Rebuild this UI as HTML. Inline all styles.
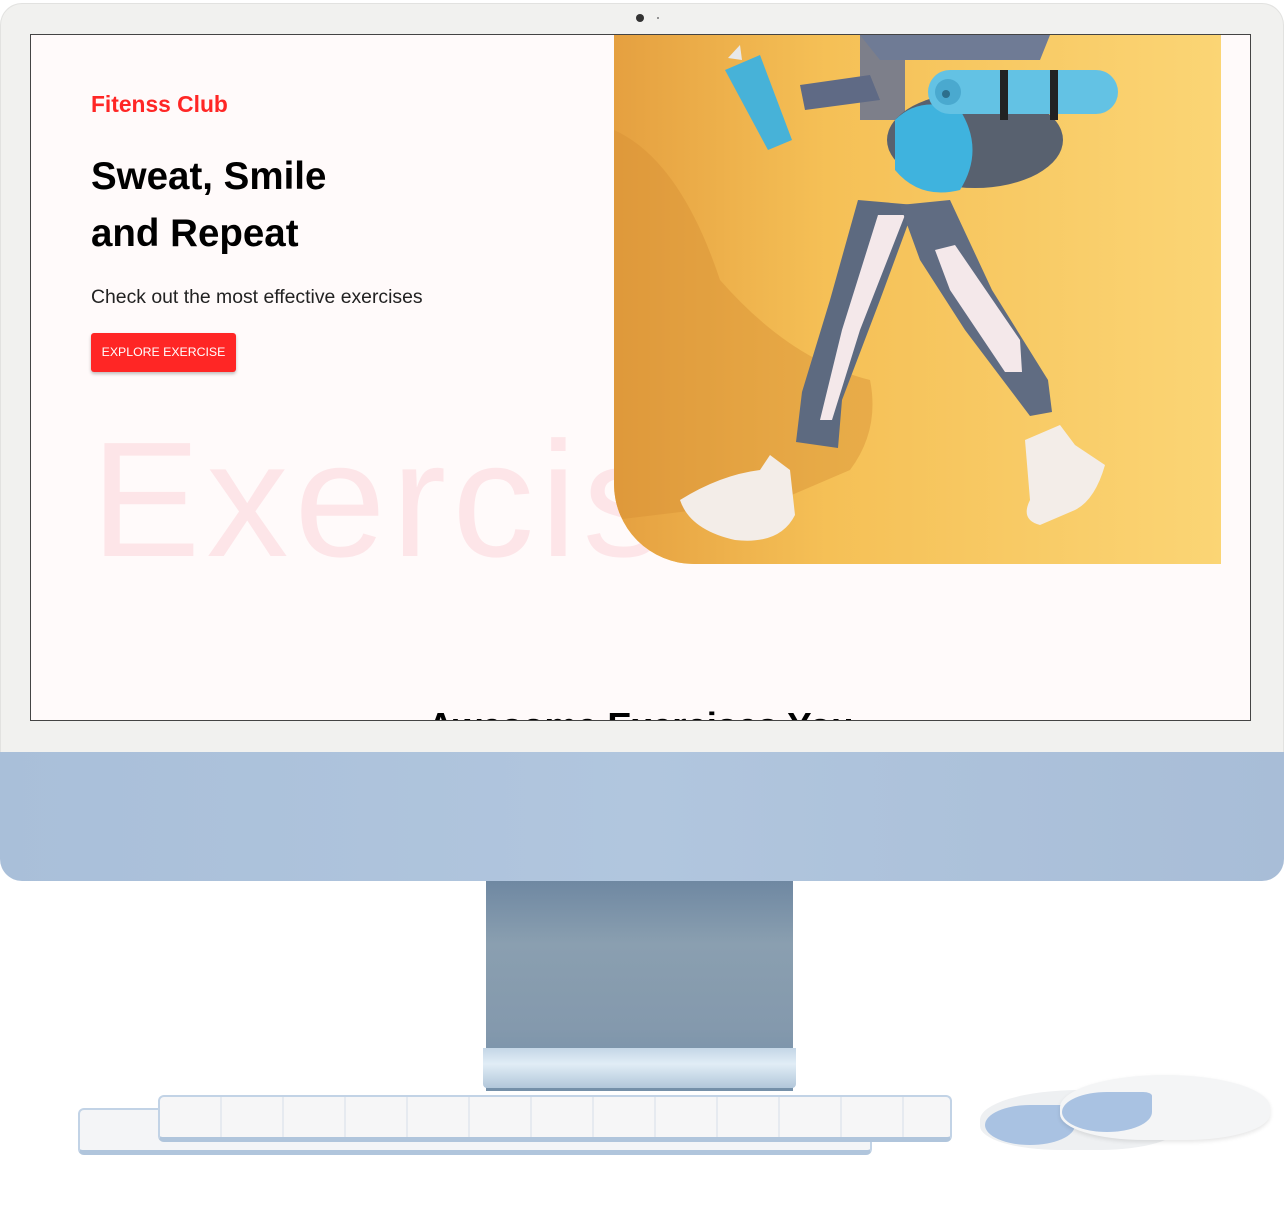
<!DOCTYPE html>
<html><head><meta charset="utf-8"><style>
*{margin:0;padding:0;box-sizing:border-box}
body{width:1284px;height:1216px;background:#fff;position:relative;overflow:hidden;font-family:"Liberation Sans",Arial,sans-serif}
.bezel{position:absolute;left:0;top:3px;width:1284px;height:750px;background:#f1f1ef;border-radius:22px 22px 0 0;border:1px solid #e2e2e0;border-bottom:none}
.chin{position:absolute;left:0;top:752px;width:1284px;height:129px;background:linear-gradient(90deg,#a9bfd9,#b1c6de 50%,#a8bdd7);border-radius:0 0 22px 22px}
.cam{position:absolute;left:636px;top:14px;width:8px;height:8px;border-radius:50%;background:#333}
.cam2{position:absolute;left:657px;top:17px;width:2px;height:2px;border-radius:50%;background:#777}
.screen{position:absolute;left:30px;top:34px;width:1221px;height:687px;background:#fffafa;border:1px solid #444;overflow:hidden}
.brand{position:absolute;left:60px;top:56px;color:#ff2625;font-weight:bold;font-size:22.8px}
h1{position:absolute;left:60px;top:113px;font-size:38.5px;line-height:57px;font-weight:bold;color:#000}
.sub{position:absolute;left:60px;top:251px;font-size:19.4px;color:#222}
.btn{position:absolute;left:60px;top:298px;width:145px;height:39px;background:#ff2625;color:#fff;font-size:12.3px;line-height:39px;text-align:center;border-radius:3px;box-shadow:0 2px 3px rgba(0,0,0,.25)}
.big{position:absolute;left:60px;top:383px;font-size:164px;color:#fde5e8;letter-spacing:6px;line-height:1}
.aw{position:absolute;left:0;width:100%;top:670px;text-align:center;font-size:36.5px;font-weight:bold;color:#000}
.img{position:absolute;left:583px;top:0;width:607px;height:529px;border-bottom-left-radius:80px;overflow:hidden;background:#f7c864}
.stand{position:absolute;left:486px;top:881px;width:307px;height:210px;background:linear-gradient(180deg,#6f88a2 0%,#8a9fb0 30%,#8499ad 70%,#7590a9 95%)}
.foot{position:absolute;left:483px;top:1048px;width:313px;height:40px;background:linear-gradient(180deg,#c4d6e6,#e1edf6 40%,#b2c7da);border-radius:0 0 4px 4px}
</style></head><body>
<div class="bezel"></div>
<div class="cam"></div><div class="cam2"></div>
<div class="screen">
 <div class="brand">Fitenss Club</div>
 <h1>Sweat, Smile<br>and Repeat</h1>
 <div class="sub">Check out the most effective exercises</div>
 <div class="btn">EXPLORE EXERCISE</div>
 <div class="big">Exercis</div>
 <div class="aw">Awesome Exercises You</div>
 <div class="img">
  <svg width="607" height="529" viewBox="614 35 607 529" xmlns="http://www.w3.org/2000/svg">
   <defs><linearGradient id="bg" x1="0" x2="1" y1="0" y2="0"><stop offset="0" stop-color="#e5a040"/><stop offset=".35" stop-color="#f5c056"/><stop offset="1" stop-color="#fbd575"/></linearGradient></defs>
   <rect x="614" y="35" width="607" height="529" fill="url(#bg)"/>
   <path d="M614 130 Q680 160 720 280 Q790 360 870 380 Q880 430 850 470 L780 500 L614 520 Z" fill="#d89035" opacity=".45"/>
   <path d="M860 35 L905 35 L905 120 L860 120 Z" fill="#7d7f8a"/>
   <path d="M800 85 L870 75 L880 100 L805 110 Z" fill="#5f6a85"/>
   <path d="M860 35 L1050 35 L1040 60 L880 60 Z" fill="#6f7b95"/>
   <path d="M858 200 L915 205 L880 300 L842 400 L838 448 L796 442 L802 392 L830 300 Z" fill="#5d6a80"/>
   <path d="M878 215 L905 215 L860 330 L832 420 L820 420 L842 330 Z" fill="#f4e8ea"/>
   <path d="M900 205 L950 200 L992 290 L1048 380 L1052 412 L1030 416 L965 330 L920 260 Z" fill="#606c82"/>
   <path d="M935 250 L955 245 L1020 340 L1022 372 L1005 372 L950 290 Z" fill="#f4e8ea"/>
   <ellipse cx="975" cy="140" rx="88" ry="48" fill="#58616f"/>
   <path d="M895 120 Q920 95 960 110 Q985 150 960 190 Q920 200 895 170 Z" fill="#3fb3de"/>
   <rect x="928" y="70" width="190" height="44" rx="22" fill="#63c2e4"/>
   <circle cx="948" cy="92" r="13" fill="#4aa9cf"/><circle cx="946" cy="94" r="4" fill="#2d6f8c"/>
   <rect x="1000" y="70" width="8" height="50" fill="#222"/><rect x="1050" y="70" width="8" height="50" fill="#222"/>
   <path d="M725 70 L760 55 L792 140 L768 150 Z" fill="#47b2d8"/>
   <path d="M728 58 L740 45 L742 60 Z" fill="#e8e8e8"/>
   <path d="M680 500 Q720 475 760 470 L770 455 L790 470 L795 515 Q780 545 735 540 Q690 530 680 500 Z" fill="#f3ede8"/>
   <path d="M1025 440 L1060 425 L1075 445 L1105 465 Q1095 500 1075 510 L1040 525 Q1020 520 1030 500 Z" fill="#f3ede8"/>
  </svg>
 </div>
</div>
<div class="chin"></div>
<div class="stand"></div>
<div class="foot"></div>
<div style="position:absolute;left:78px;top:1108px;width:794px;height:47px;background:#f4f5f7;border:2px solid #c2d3e6;border-bottom:5px solid #b0c5dc;border-radius:6px"></div>
<div style="position:absolute;left:158px;top:1095px;width:794px;height:47px;background:repeating-linear-gradient(90deg,#f6f6f7 0 60px,#e6eaf0 60px 62px);border:2px solid #c2d3e6;border-bottom:5px solid #b0c5dc;border-radius:6px"></div>
<div style="position:absolute;left:980px;top:1090px;width:200px;height:60px;background:#eef0f2;border-radius:50% 50% 40% 40%"></div>
<div style="position:absolute;left:985px;top:1105px;width:90px;height:40px;background:#a9c2e2;border-radius:50% 10% 50% 50%"></div>
<div style="position:absolute;left:1060px;top:1075px;width:210px;height:65px;background:#f4f5f6;border-radius:50% 50% 40% 40%;box-shadow:0 2px 4px rgba(0,0,0,.1)"></div>
<div style="position:absolute;left:1062px;top:1092px;width:90px;height:40px;background:#a9c2e2;border-radius:50% 10% 50% 50%"></div>
</body></html>
